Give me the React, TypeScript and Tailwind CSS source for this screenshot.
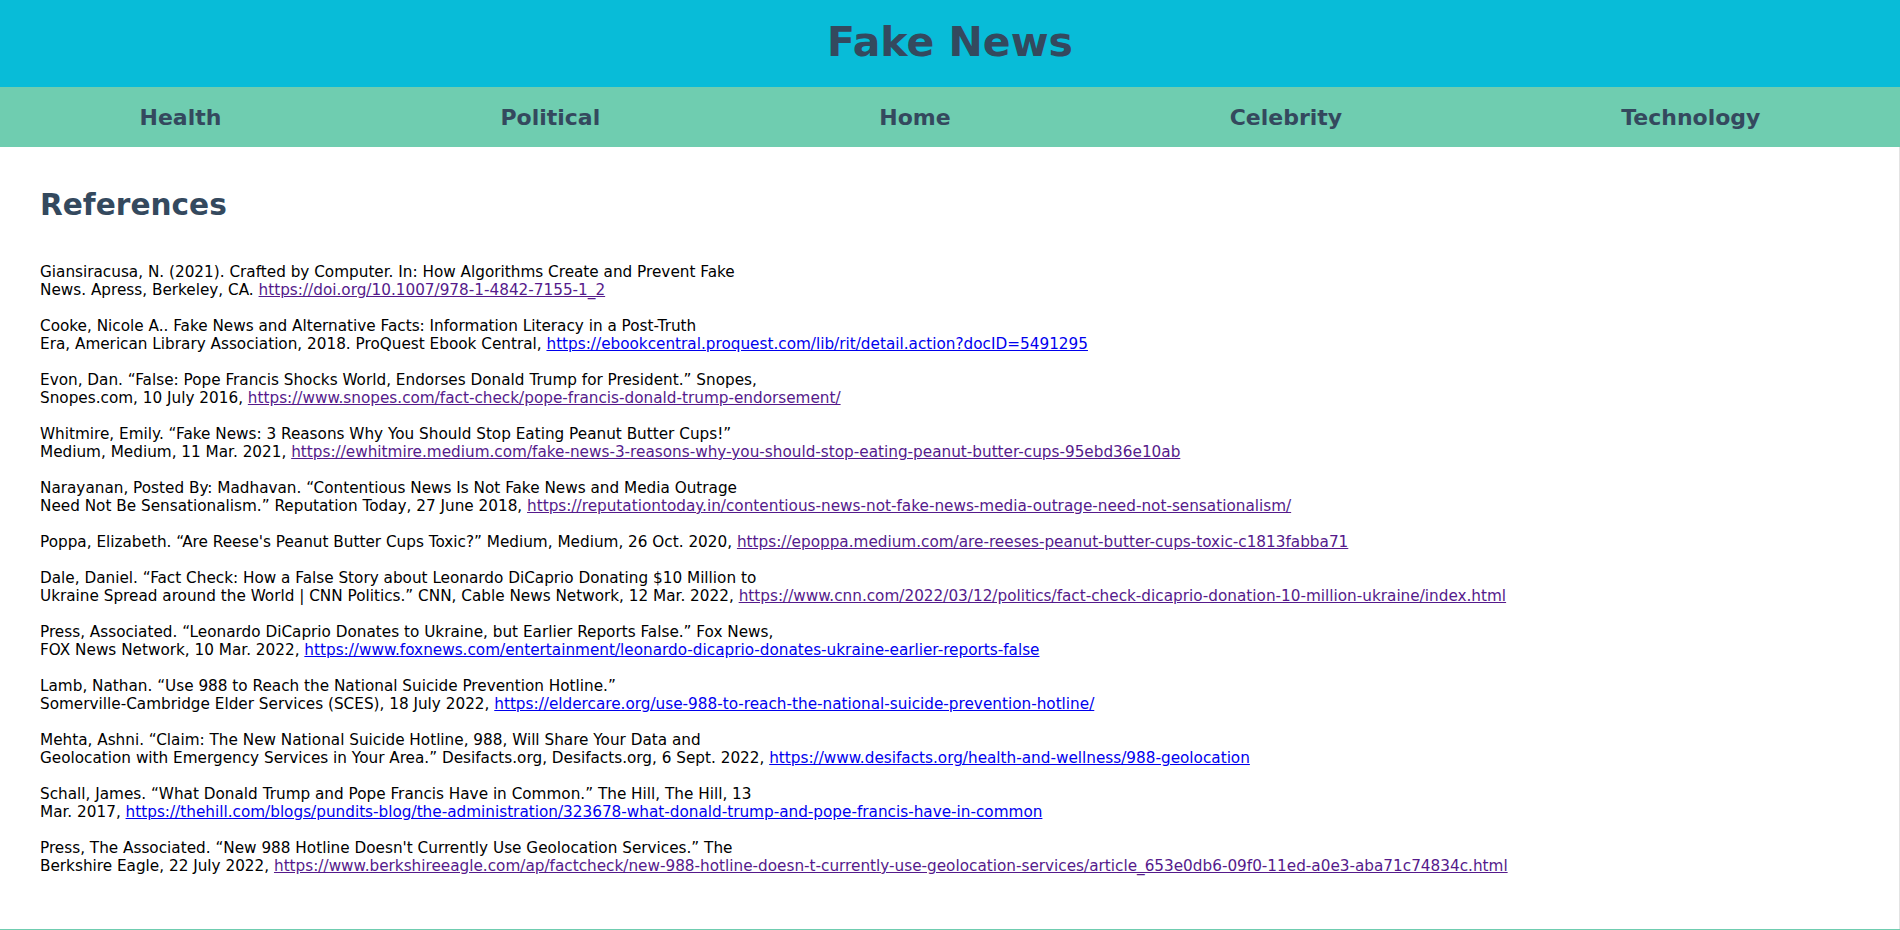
import React from 'react';

type Ref = {
  lines: string[];
  rest: string;
  url: string;
  visited?: boolean;
};

const refs: Ref[] = [
  {
    lines: ['Giansiracusa, N. (2021). Crafted by Computer. In: How Algorithms Create and Prevent Fake'],
    rest: 'News. Apress, Berkeley, CA. ',
    url: 'https://doi.org/10.1007/978-1-4842-7155-1_2',
    visited: true,
  },
  {
    lines: ['Cooke, Nicole A.. Fake News and Alternative Facts: Information Literacy in a Post-Truth'],
    rest: 'Era, American Library Association, 2018. ProQuest Ebook Central, ',
    url: 'https://ebookcentral.proquest.com/lib/rit/detail.action?docID=5491295',
  },
  {
    lines: ['Evon, Dan. \u201cFalse: Pope Francis Shocks World, Endorses Donald Trump for President.\u201d Snopes,'],
    rest: 'Snopes.com, 10 July 2016, ',
    url: 'https://www.snopes.com/fact-check/pope-francis-donald-trump-endorsement/',
    visited: true,
  },
  {
    lines: ['Whitmire, Emily. \u201cFake News: 3 Reasons Why You Should Stop Eating Peanut Butter Cups!\u201d'],
    rest: 'Medium, Medium, 11 Mar. 2021, ',
    url: 'https://ewhitmire.medium.com/fake-news-3-reasons-why-you-should-stop-eating-peanut-butter-cups-95ebd36e10ab',
    visited: true,
  },
  {
    lines: ['Narayanan, Posted By: Madhavan. \u201cContentious News Is Not Fake News and Media Outrage'],
    rest: 'Need Not Be Sensationalism.\u201d Reputation Today, 27 June 2018, ',
    url: 'https://reputationtoday.in/contentious-news-not-fake-news-media-outrage-need-not-sensationalism/',
    visited: true,
  },
  {
    lines: [],
    rest: 'Poppa, Elizabeth. \u201cAre Reese\'s Peanut Butter Cups Toxic?\u201d Medium, Medium, 26 Oct. 2020, ',
    url: 'https://epoppa.medium.com/are-reeses-peanut-butter-cups-toxic-c1813fabba71',
    visited: true,
  },
  {
    lines: ['Dale, Daniel. \u201cFact Check: How a False Story about Leonardo DiCaprio Donating $10 Million to'],
    rest: 'Ukraine Spread around the World | CNN Politics.\u201d CNN, Cable News Network, 12 Mar. 2022, ',
    url: 'https://www.cnn.com/2022/03/12/politics/fact-check-dicaprio-donation-10-million-ukraine/index.html',
    visited: true,
  },
  {
    lines: ['Press, Associated. \u201cLeonardo DiCaprio Donates to Ukraine, but Earlier Reports False.\u201d Fox News,'],
    rest: 'FOX News Network, 10 Mar. 2022, ',
    url: 'https://www.foxnews.com/entertainment/leonardo-dicaprio-donates-ukraine-earlier-reports-false',
  },
  {
    lines: ['Lamb, Nathan. \u201cUse 988 to Reach the National Suicide Prevention Hotline.\u201d'],
    rest: 'Somerville-Cambridge Elder Services (SCES), 18 July 2022, ',
    url: 'https://eldercare.org/use-988-to-reach-the-national-suicide-prevention-hotline/',
  },
  {
    lines: ['Mehta, Ashni. \u201cClaim: The New National Suicide Hotline, 988, Will Share Your Data and'],
    rest: 'Geolocation with Emergency Services in Your Area.\u201d Desifacts.org, Desifacts.org, 6 Sept. 2022, ',
    url: 'https://www.desifacts.org/health-and-wellness/988-geolocation',
  },
  {
    lines: ['Schall, James. \u201cWhat Donald Trump and Pope Francis Have in Common.\u201d The Hill, The Hill, 13'],
    rest: 'Mar. 2017, ',
    url: 'https://thehill.com/blogs/pundits-blog/the-administration/323678-what-donald-trump-and-pope-francis-have-in-common',
  },
  {
    lines: ['Press, The Associated. \u201cNew 988 Hotline Doesn\'t Currently Use Geolocation Services.\u201d The'],
    rest: 'Berkshire Eagle, 22 July 2022, ',
    url: 'https://www.berkshireeagle.com/ap/factcheck/new-988-hotline-doesn-t-currently-use-geolocation-services/article_653e0db6-09f0-11ed-a0e3-aba71c74834c.html',
    visited: true,
  },
];

const navItems = ['Health', 'Political', 'Home', 'Celebrity', 'Technology'];

export default function App() {
  return (
    <div className="min-h-[930px] bg-white font-['DejaVu_Sans',Verdana,sans-serif]">
      {/* Header */}
      <header className="h-[87px] bg-[#08bcd8] flex items-center justify-center">
        <h1 className="text-[41px] font-bold text-[#34495e] leading-none pb-[2px]">Fake News</h1>
      </header>

      {/* Nav */}
      <nav className="h-[60px] bg-[#6fcdb0] flex items-center justify-around">
        {navItems.map((item) => (
          <a key={item} className="text-[22px] font-bold text-[#34495e] cursor-pointer">
            {item}
          </a>
        ))}
      </nav>

      {/* Content */}
      <main className="min-h-[782px] border-r border-[#e3e3e3] pl-[40px] pt-[40px]">
        <h2 className="text-[29.6px] font-bold text-[#34495e] leading-[36px]">References</h2>

        <div className="mt-[40px] text-[15.25px] leading-[18px] text-black">
          {refs.map((r, i) => (
            <p key={i} className="mb-[18px]">
              {r.lines.map((l, j) => (
                <React.Fragment key={j}>
                  {l}
                  <br />
                </React.Fragment>
              ))}
              {r.rest}
              <a
                href={r.url}
                className={r.visited ? 'underline text-[#551a8b]' : 'underline text-[#0000ee]'}
              >
                {r.url}
              </a>
            </p>
          ))}
        </div>
      </main>

      <footer className="h-[1px] bg-[#6fcdb0]" />
    </div>
  );
}
